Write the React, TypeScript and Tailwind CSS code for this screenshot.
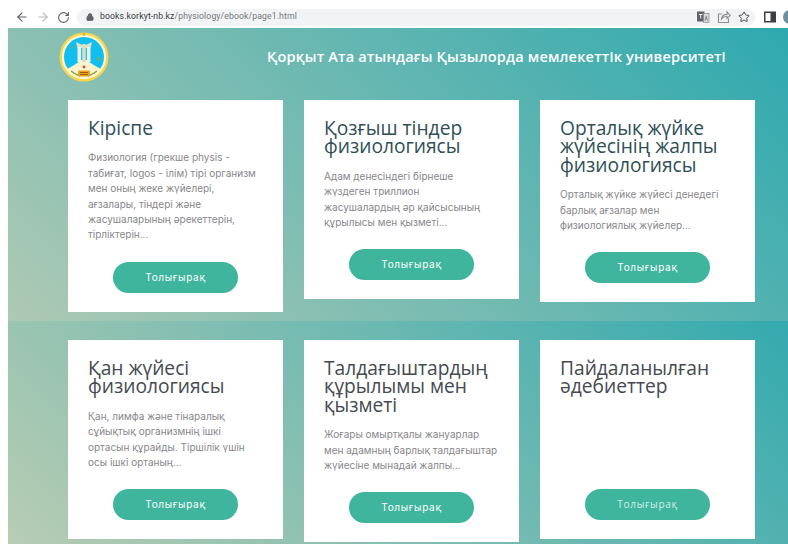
import React from 'react';
import { ArrowLeft, ArrowRight, RotateCw, Lock, Star } from 'lucide-react';

interface CardProps {
  title: string;
  body?: string;
  titleColor?: string;
  plainButton?: boolean;
}

// University crest in the header
const Crest = () => (
  <svg viewBox="0 0 50 50" className="w-[50px] h-[50px] shrink-0">
    <circle cx="25" cy="25" r="24.5" fill="#f5d64c" />
    <circle cx="25" cy="25" r="22.2" fill="#fdf7d2" />
    <circle cx="25" cy="25" r="20" fill="#12bdf0" />
    <path d="M8 37c6-3 11-6 14-9h6c3 3 8 6 14 9-4 6-10 9-17 9S12 43 8 37z" fill="#fbf5cf" />
    <path d="M17 10l8 4 8-4-1.5 6h-13z" fill="#e6e3c4" />
    <rect x="18.5" y="15" width="3.6" height="15" fill="#eef0dc" />
    <rect x="23.2" y="12" width="3.6" height="18" fill="#cfe0cf" />
    <rect x="27.9" y="15" width="3.6" height="15" fill="#eef0dc" />
    <path d="M9 16l6-2-2 2.5z" fill="#6fb06a" />
    <path d="M37 28l4-4v5z" fill="#6fb06a" />
    <path d="M12 39c3 2.5 6 4 9 5M38 39c-3 2.5-6 4-9 5" stroke="#7fa84e" strokeWidth="1.5" fill="none" />
    <circle cx="25" cy="35" r="1.4" fill="#e0452f" />
    <rect x="19" y="38.5" width="12" height="6" rx="1" fill="#e9a520" />
    <path d="M21 40.5h8M21 42.5h8" stroke="#8a4a10" strokeWidth="0.8" />
    <path d="M25 0.5l1.8 3h-3.6z" fill="#e9a520" />
  </svg>
);

const TranslateIcon = () => (
  <svg viewBox="0 0 14 14" className="w-[14px] h-[14px]">
    <rect x="1" y="1.5" width="7.5" height="10" fill="#5f6368" />
    <rect x="7.5" y="3.5" width="5.5" height="9" fill="#d5d7da" stroke="#8a8d91" strokeWidth="0.7" />
    <path d="M3 4.5h3.5M4.7 4v4.5" stroke="#fff" strokeWidth="0.9" />
    <path d="M9 10.5l1.2-4 1.2 4" stroke="#5f6368" strokeWidth="0.7" fill="none" />
  </svg>
);

const ShareIcon = () => (
  <svg viewBox="0 0 14 14" className="w-[14px] h-[14px]" fill="none" stroke="#8d9094" strokeWidth="1.1">
    <path d="M5 4H1.5v8.5h10V8.5" />
    <path d="M4.5 9c.4-3 2.8-4.6 5.5-4.6V2l3.2 3.4L10 8.5V6.2C8 6.2 6 7 4.5 9z" />
  </svg>
);

const SidePanelIcon = () => (
  <svg viewBox="0 0 12 12" className="w-[12px] h-[12px]">
    <rect x="0.75" y="1.25" width="10.5" height="9.5" fill="none" stroke="#3c4043" strokeWidth="1.5" />
    <rect x="6.5" y="1.25" width="4.75" height="9.5" fill="#3c4043" />
  </svg>
);

const BrowserBar = () => (
  <div className="h-7 flex items-center overflow-hidden bg-white pl-[15px] pt-[6px] text-[#5f6368]">
    <ArrowLeft size={14} strokeWidth={2} className="shrink-0" />
    <ArrowRight size={14} strokeWidth={2} className="shrink-0 ml-[7px] text-[#b6b9bd]" />
    <RotateCw size={13} strokeWidth={2} className="shrink-0 ml-[7px]" />
    <div className="shrink-0 ml-[7px] w-[678px] h-[17px] flex items-center bg-[#f1f3f4] rounded-full pl-[9px] pr-[5px]">
      <Lock size={8} strokeWidth={3} fill="#5f6368" />
      <span className="ml-[6px] text-[8.7px] font-['Roboto',sans-serif] tracking-[0.1px] text-[#75787c]">
        <span className="text-[#3c4043]">books.korkyt-nb.kz</span>/physiology/ebook/page1.html
      </span>
      <div className="ml-auto flex items-center gap-[7px]">
        <TranslateIcon />
        <ShareIcon />
        <Star size={12} strokeWidth={2} className="text-[#4b4e52]" />
      </div>
    </div>
    <div className="shrink-0 ml-[9px]">
      <SidePanelIcon />
    </div>
    <div className="ml-[7px] w-[14px] h-[14px] shrink-0 rounded-full bg-[#6f8f9f]" />
  </div>
);

const Card: React.FC<CardProps> = ({ title, body, titleColor = 'text-[#2f4f56]', plainButton }) => (
  <div className="bg-white flex flex-col pt-[19px] px-5 pb-[19px]">
    <h3 className={`text-[19.2px] leading-[18.4px] font-['Open_Sans',sans-serif] whitespace-pre-line ${titleColor}`}>
      {title}
    </h3>
    {/* the last card has no summary, only its empty block */}
    <p
      className={`mt-[13px] mb-[19px] text-[10px] leading-[15.4px] text-[#87878a] font-['Inter',sans-serif] whitespace-pre-line ${
        body ? '' : 'h-[61px]'
      }`}
    >
      {body}
    </p>
    <button
      className={`self-center w-[125px] h-[31px] rounded-full bg-[#3eb59c] text-[10px] tracking-[0.7px] ${
        plainButton
          ? "text-[#d2efe8] font-['Open_Sans',sans-serif]"
          : "text-white font-['Inter',sans-serif]"
      }`}
    >
      Толығырақ
    </button>
  </div>
);

export default function App() {
  return (
    <div className="h-[544px] overflow-hidden bg-white">
      <BrowserBar />
      <div className="ml-2">
        {/* Top band: header and first row of cards */}
        <section className="h-[293px] bg-[linear-gradient(45deg,#aec9b4,#2ea9af)] px-[60px]">
          <header className="h-[58px] mb-[14px] flex items-center -ml-[9px]">
            <Crest />
            <h1 className="ml-[158px] text-[14.5px] font-semibold text-white whitespace-nowrap font-['Open_Sans',sans-serif] tracking-[0.2px]">
              Қорқыт Ата атындағы Қызылорда мемлекеттік университеті
            </h1>
          </header>
          <div className="grid grid-cols-[215px_215px_215px] gap-x-[21px] items-start">
            <Card
              title="Кіріспе"
              body={'Физиология (грекше physis -\nтабиғат, logos - ілім) тірі организм\nмен оның жеке жүйелері,\nағзалары, тіндері және\nжасушаларының әрекеттерін,\nтірліктерін...'}
            />
            <Card
              title={'Қозғыш тіндер\nфизиологиясы'}
              body={'Адам денесіндегі бірнеше\nжүздеген триллион\nжасушалардың әр қайсысының\nқұрылысы мен қызметі...'}
            />
            <Card
              title={'Орталық жүйке\nжүйесінің жалпы\nфизиологиясы'}
              body={'Орталық жүйке жүйесі денедегі\nбарлық ағзалар мен\nфизиологиялық жүйелер...'}
            />
          </div>
        </section>

        {/* Second band with the remaining cards */}
        <section className="h-[223px] bg-[linear-gradient(45deg,#b8ccb3,#34aaaf)] px-[60px] pt-[19px]">
          <div className="grid grid-cols-[215px_215px_215px] gap-x-[21px] items-start">
            <Card
              title={'Қан жүйесі\nфизиологиясы'}
              titleColor="text-[#444a50]"
              body={'Қан, лимфа және тінаралық\nсұйықтық организмнің ішкі\nортасын құрайды. Тіршілік үшін\nосы ішкі ортаның...'}
            />
            <Card
              title={'Талдағыштардың\nқұрылымы мен\nқызметі'}
              titleColor="text-[#444a50]"
              body={'Жоғары омыртқалы жануарлар\nмен адамның барлық талдағыштар\nжүйесіне мынадай жалпы...'}
            />
            <Card title={'Пайдаланылған\nәдебиеттер'} titleColor="text-[#444a50]" plainButton />
          </div>
        </section>
      </div>
    </div>
  );
}
